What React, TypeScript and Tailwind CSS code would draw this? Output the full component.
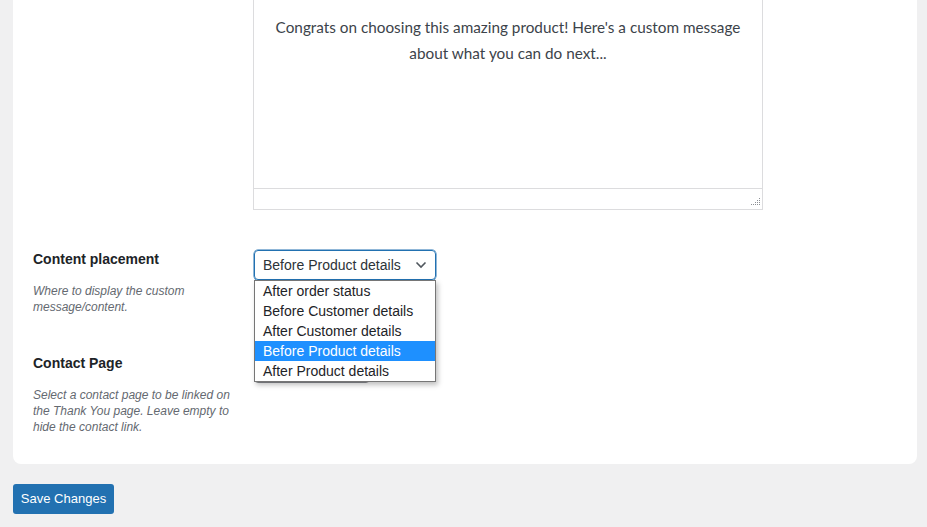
import React from "react";

const ui = "font-['Liberation_Sans','Noto_Sans',sans-serif]";

const options = [
  "After order status",
  "Before Customer details",
  "After Customer details",
  "Before Product details",
  "After Product details",
];

const Chevron: React.FC = () => (
  <svg width="12" height="8" viewBox="0 0 12 8" fill="none" className="text-[#50575e]">
    <path d="M1.5 1.5 L6 6 L10.5 1.5" stroke="currentColor" strokeWidth="1.6" />
  </svg>
);

export default function App() {
  return (
    <div className={`min-h-screen bg-[#f0f0f1] pb-6 ${ui}`}>
      <div className="ml-[13px] mr-[10px] rounded-b-lg bg-white pl-5 pb-[29px]">
        <div className="flex">
          <div className="w-[220px] shrink-0" />
          <div className="w-[510px] border-x border-b border-[#dcdcde]">
            <div className="h-[188px] px-[12px] pt-[14px] text-center font-['Lato',sans-serif] text-[15.3px] leading-[26px] text-[#3c434a]">
              Congrats on choosing this amazing product! Here's a custom message
              <br />
              about what you can do next...
            </div>
            <div className="relative h-[21px] border-t border-[#dcdcde]">
              <svg width="9" height="9" viewBox="0 0 9 9" className="absolute right-[2px] bottom-[3px]">
                {[
                  [8, 1], [8, 3], [6, 3], [8, 5], [6, 5], [4, 5], [8, 7], [6, 7], [4, 7], [2, 7], [0, 7],
                ].map(([x, y], i) => (
                  <rect key={i} x={x} y={y} width="1" height="1" fill="#8c8f94" />
                ))}
              </svg>
            </div>
          </div>
        </div>

        <div className="mt-[40px] flex">
          <div className="w-[221px] shrink-0">
            <div className="text-[14px] font-bold leading-[18px] text-[#1d2327]">Content placement</div>
            <p className="mt-[15px] w-[170px] text-[12px] italic leading-[16px] text-[#646970]">
              Where to display the custom message/content.
            </p>
          </div>
          <div className="relative">
            <div className="flex h-[30px] w-[182px] items-center justify-between rounded-[4px] border border-[#2271b1] pl-2 pr-[8px] text-[14px] text-[#2c3338] shadow-[0_0_0_0.5px_#2271b1]">
              <span>Before Product details</span>
              <Chevron />
            </div>
            <ul className="absolute left-0 top-[30px] z-10 w-[182px] border border-[#767676] bg-white py-0 text-[14px] leading-[20px] text-[#1d2327] shadow-[2px_3px_5px_rgba(0,0,0,0.25)]">
              {options.map((o) => (
                <li
                  key={o}
                  className={
                    o === "Before Product details"
                      ? "bg-[#1e90ff] pl-2 text-white"
                      : "pl-2"
                  }
                >
                  {o}
                </li>
              ))}
            </ul>
          </div>
        </div>

        <div className="mt-[38px] flex">
          <div className="w-[221px] shrink-0">
            <div className="pt-px text-[14px] font-bold leading-[18px] text-[#1d2327]">Contact Page</div>
            <p className="mt-[15px] w-[200px] text-[12px] italic leading-[16px] text-[#646970]">
              Select a contact page to be linked on the Thank You page. Leave empty to hide the contact link.
            </p>
          </div>
          <div className="h-[30px] w-[116px] rounded-[4px] border border-[#8c8f94] bg-white" />
        </div>
      </div>

      <button className="ml-[13px] mt-[20px] h-[30px] w-[101px] rounded-[3px] bg-[#2271b1] text-[13px] text-white">
        Save Changes
      </button>
    </div>
  );
}
